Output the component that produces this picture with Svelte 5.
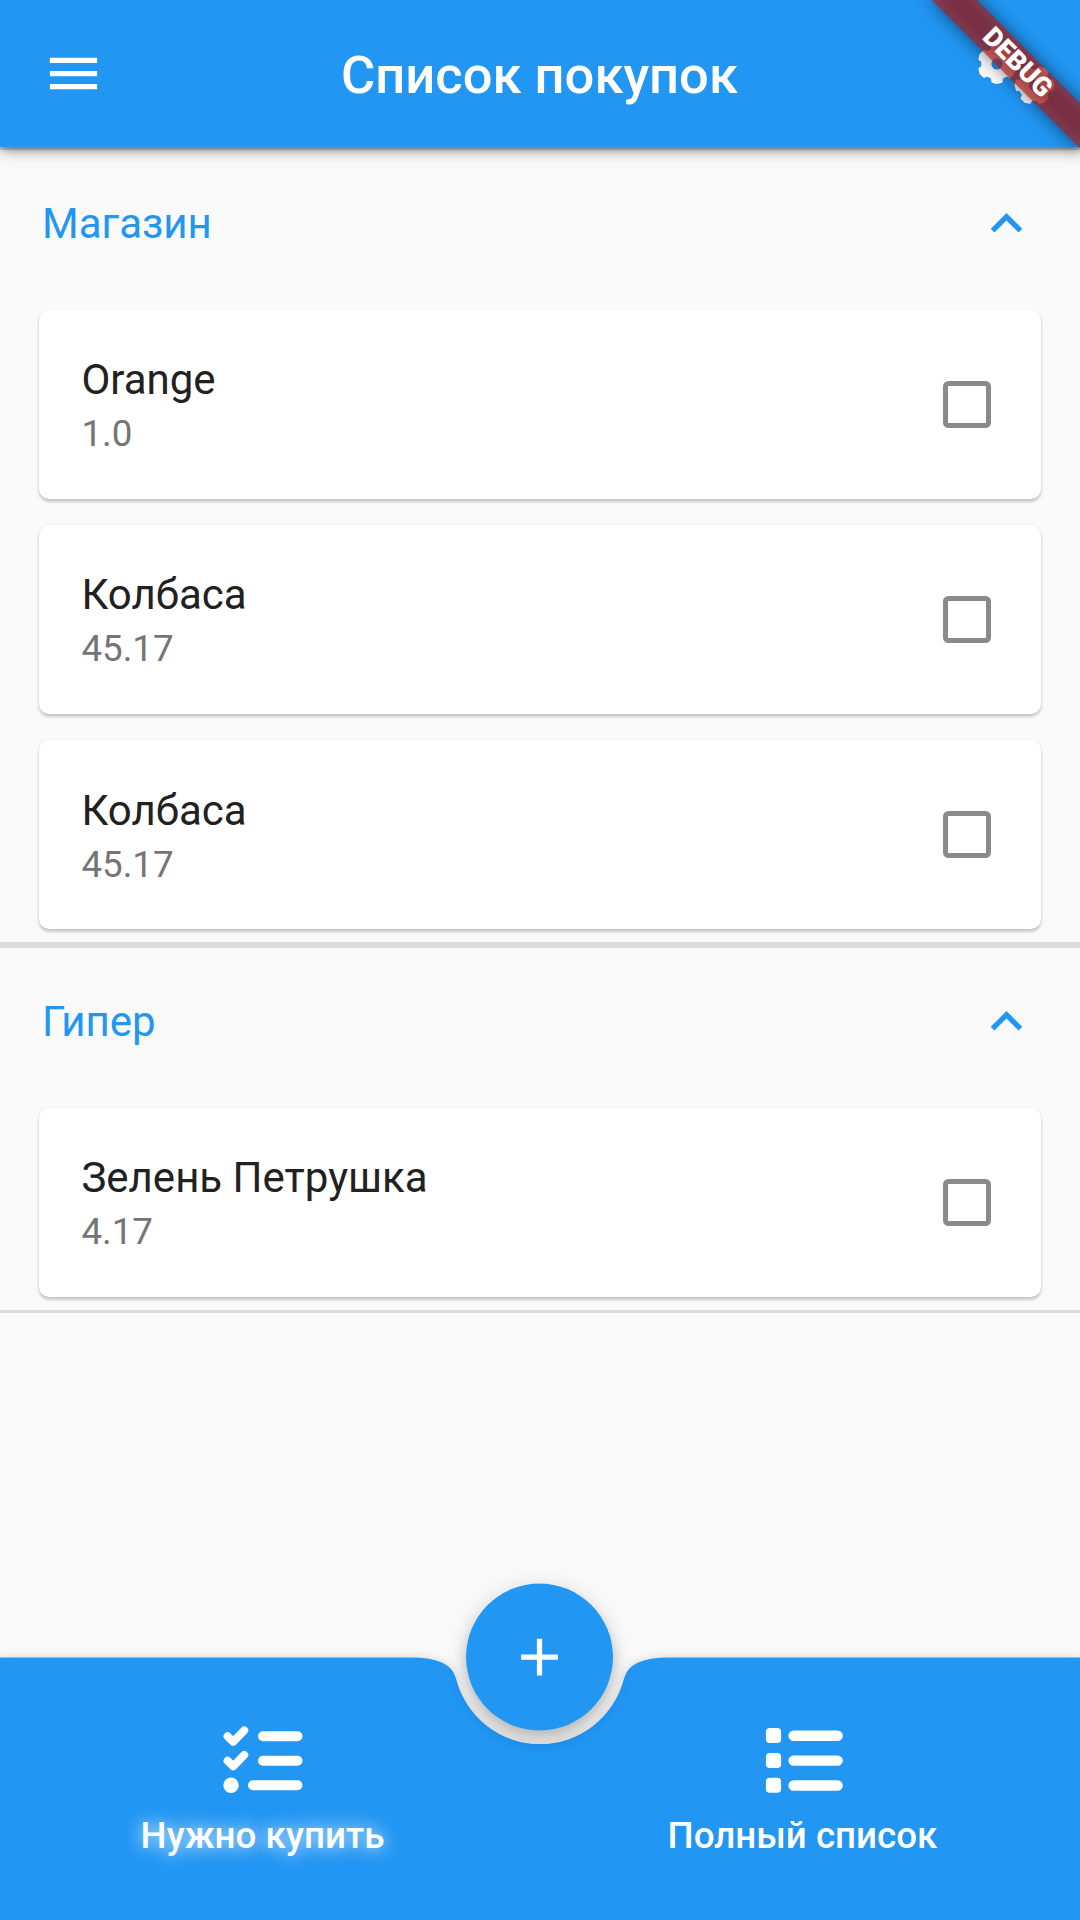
<script>
  const sections = [
    {
      title: 'Магазин',
      items: [
        { name: 'Orange', amount: '1.0' },
        { name: 'Колбаса', amount: '45.17' },
        { name: 'Колбаса', amount: '45.17' },
      ],
    },
    { title: 'Гипер', items: [{ name: 'Зелень Петрушка', amount: '4.17' }] },
  ];

  // Outline of a six-toothed gear centred on the origin
  function gear(phase) {
    const teeth = 6;
    const step = (Math.PI * 2) / teeth;
    const points = [];
    for (let i = 0; i < teeth; i++) {
      const a = phase + i * step;
      for (const [da, r] of [[-0.44, 14.6], [-0.33, 14.6], [-0.25, 18], [0, 18.7], [0.25, 18], [0.33, 14.6], [0.44, 14.6]]) {
        points.push(`${(r * Math.cos(a + da)).toFixed(2)},${(r * Math.sin(a + da)).toFixed(2)}`);
      }
    }
    return `M${points.join('L')}ZM6.8,0A6.8,6.8 0 1 0 -6.8,0A6.8,6.8 0 1 0 6.8,0Z`;
  }
</script>

<div class="screen">
  <header class="appbar">
    <button class="icon-button" aria-label="Menu">
      <svg viewBox="0 0 24 24"><path d="M3 18h18v-2H3v2zm0-5h18v-2H3v2zm0-7v2h18V6H3z" /></svg>
    </button>
    <h1>Список покупок</h1>
    <button class="icon-button gears" aria-label="Settings">
      <svg viewBox="0 0 84 63">
        <path transform="translate(24 22)" d={gear(Math.PI / 2)} />
        <path transform="translate(61.5 43.3)" d={gear(0)} />
      </svg>
    </button>
  </header>

  <main>
    {#each sections as section}
      <section>
        <div class="divider"></div>
        <div class="section-head">
          <h2>{section.title}</h2>
          <svg viewBox="0 0 24 24"><path d="M12 8l-6 6 1.41 1.41L12 10.83l4.59 4.58L18 14z" /></svg>
        </div>
        <div class="cards">
          {#each section.items as item}
            <article class="card">
              <div class="texts">
                <div class="name">{item.name}</div>
                <div class="amount">{item.amount}</div>
              </div>
              <span class="checkbox" role="checkbox" aria-checked="false" aria-label={item.name} tabindex="0"></span>
            </article>
          {/each}
        </div>
        <div class="divider"></div>
      </section>
    {/each}
  </main>

  <nav>
    <svg class="bar-shape" viewBox="0 0 1080 263">
      <path transform="translate(0 0.5) scale(2.625)" d="M0 0H156.714Q171.714 0 173.684 7.94A33 33 0 0 0 237.744 7.94Q239.714 0 254.714 0H411.5V101H0Z" />
    </svg>
    <div class="tabs">
      <div class="tab active">
        <svg viewBox="0 0 80 68">
          <g fill="none" stroke="#fff" stroke-width="8" stroke-linecap="round" stroke-linejoin="round">
            <path d="M4.6 10.3L10.3 15.8L21.2 4.4M4.6 34.8L10.3 40.3L21.2 28.9" />
          </g>
          <g fill="none" stroke="#fff" stroke-width="10" stroke-linecap="round">
            <path d="M40 10.2H74.5M40 34.7H74.5M30 59.2H74.5" />
          </g>
          <circle cx="8" cy="59.3" r="7.7" fill="#fff" />
        </svg>
        <span>Нужно купить</span>
      </div>
      <div class="tab">
        <svg viewBox="0 0 80 68">
          <g fill="#fff">
            <rect x="2.9" y="2.1" width="15.2" height="15" rx="3.8" />
            <rect x="2.9" y="27" width="15.2" height="15" rx="3.8" />
            <rect x="2.9" y="51.7" width="15.2" height="15" rx="3.8" />
          </g>
          <g fill="none" stroke="#fff" stroke-width="10.4" stroke-linecap="round">
            <path d="M30.6 9.7H74.6M30.6 34.6H74.6M30.6 59.5H74.6" />
          </g>
        </svg>
        <span>Полный список</span>
      </div>
    </div>
    <button class="fab" aria-label="Add">
      <svg viewBox="0 0 148 148">
        <circle cx="73.5" cy="74" r="73.5" fill="#2196f3" />
        <path transform="translate(42 42.5) scale(2.625)" d="M19 13h-6v6h-2v-6H5v-2h6V5h2v6h6v2z" fill="#fff" />
      </svg>
    </button>
  </nav>

  <div class="banner-clip">
    <div class="banner"><div class="ribbon">DEBUG</div></div>
  </div>
</div>

<style>
  :global(body) {
    background: #fafafa;
  }
  .screen {
    position: relative;
    display: flex;
    flex-direction: column;
    width: 1080px;
    height: 1920px;
    overflow: hidden;
    background: #fafafa;
    font-family: Roboto, 'Noto Sans', sans-serif;
    color: #212121;
  }
  h1,
  h2 {
    margin: 0;
    font-weight: 400;
  }
  button {
    display: block;
    padding: 0;
    border: 0;
    background: none;
  }
  svg {
    display: block;
    flex: none;
  }
  .appbar {
    position: relative;
    z-index: 1;
    flex: none;
    display: grid;
    grid-template-columns: 150px 1fr 150px;
    align-items: center;
    box-sizing: border-box;
    height: 147px;
    background: #2196f3;
    box-shadow:
      0 5px 10px -2px rgba(0, 0, 0, 0.3),
      0 8px 14px rgba(0, 0, 0, 0.12),
      0 2px 4px rgba(0, 0, 0, 0.2);
  }
  .appbar h1 {
    padding: 2px 1px 0 0;
    font-size: 52.5px;
    font-weight: 500;
    line-height: 62px;
    text-align: center;
    color: #fff;
  }
  .icon-button {
    margin-left: 42px;
  }
  .icon-button svg {
    width: 63px;
    height: 63px;
    fill: #fff;
  }
  .gears {
    margin-left: 43px;
  }
  .gears svg {
    width: 84px;
    height: 63px;
    stroke: #fff;
    stroke-width: 2.5;
    stroke-linejoin: round;
    fill-rule: evenodd;
  }
  main {
    flex: 1;
  }
  .divider {
    height: 2.625px;
    background: #dcdcdc;
  }
  .section-head {
    display: flex;
    align-items: center;
    justify-content: space-between;
    height: 147px;
    padding: 0 42px;
    color: #2196f3;
  }
  .section-head h2 {
    padding-top: 2px;
    font-size: 42px;
    line-height: 50px;
  }
  .section-head svg {
    width: 63px;
    height: 63px;
    fill: #2196f3;
  }
  .cards {
    display: grid;
    gap: 26.25px;
    padding: 13.125px 39.375px;
  }
  .card {
    display: flex;
    align-items: center;
    justify-content: space-between;
    box-sizing: border-box;
    height: 189px;
    padding: 0 50px 0 42px;
    border-radius: 10.5px;
    background: #fff;
    box-shadow:
      0 2.5px 3px rgba(0, 0, 0, 0.18),
      0 1px 4px rgba(0, 0, 0, 0.06);
  }
  .texts {
    padding-top: 3.6px;
  }
  .name {
    font-size: 42px;
    line-height: 50px;
  }
  .amount {
    margin-top: 6px;
    font-size: 36.75px;
    line-height: 46px;
    color: #757575;
  }
  .checkbox {
    box-sizing: border-box;
    width: 47.25px;
    height: 47.25px;
    border: 5.25px solid #8a8a8a;
    border-radius: 5.5px;
  }
  nav {
    flex: none;
    display: grid;
    height: 263px;
  }
  nav > * {
    grid-area: 1 / 1;
  }
  .bar-shape {
    width: 1080px;
    height: 263px;
    overflow: visible;
    fill: #2196f3;
    filter: drop-shadow(0 0 5px rgba(0, 0, 0, 0.15));
  }
  .tabs {
    z-index: 2;
    display: flex;
    justify-content: space-around;
    padding-top: 68.5px;
  }
  .tab {
    display: flex;
    flex-direction: column;
    align-items: center;
    color: #fff;
  }
  .tab svg {
    width: 80px;
    height: 68px;
  }
  .tab span {
    margin: 20px 2px 0 0;
    font-size: 36.75px;
    font-weight: 500;
    line-height: 44px;
  }
  .active span {
    text-shadow: 0 0 18px #fff;
  }
  .fab {
    z-index: 1;
    justify-self: start;
    width: 147px;
    height: 147px;
    margin: -74px 0 0 466px;
    border-radius: 50%;
    box-shadow:
      0 9px 14px rgba(0, 0, 0, 0.2),
      0 4px 26px rgba(0, 0, 0, 0.12);
  }
  .fab svg {
    width: 148px;
    height: 148px;
    overflow: visible;
  }
  /* Debug ribbon across the top right corner */
  .banner-clip {
    position: absolute;
    z-index: 3;
    top: 0;
    right: 0;
    width: 200px;
    height: 200px;
    overflow: hidden;
    pointer-events: none;
  }
  .banner {
    position: absolute;
    top: 73px;
    left: 95px;
    width: 210px;
    height: 31.5px;
    transform: rotate(45deg);
    transform-origin: 105px -73px;
  }
  .banner::before {
    content: '';
    position: absolute;
    inset: 0;
    background: rgba(0, 0, 0, 0.5);
    filter: blur(9px);
  }
  .ribbon {
    position: relative;
    height: 100%;
    background: rgba(183, 28, 28, 0.63);
    color: #fff;
    font-size: 26.775px;
    font-weight: 900;
    line-height: 31.5px;
    text-align: center;
  }
</style>
